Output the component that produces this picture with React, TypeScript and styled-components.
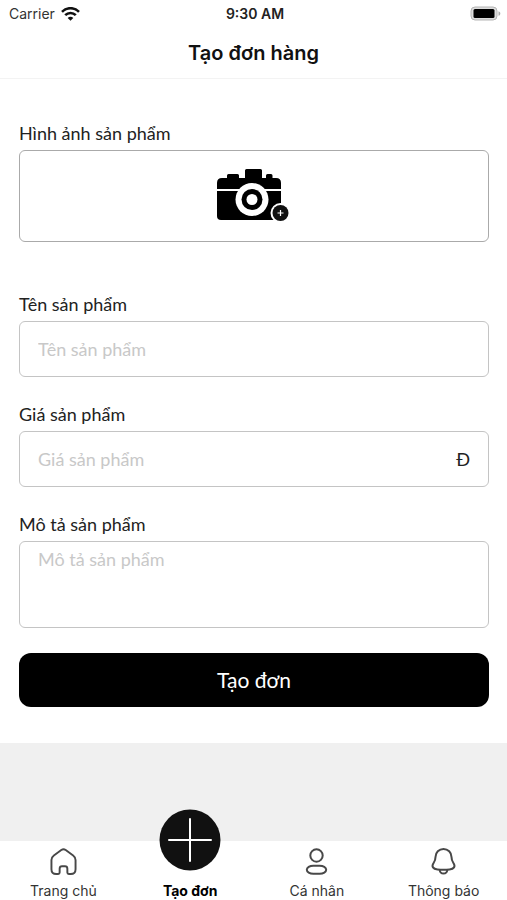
import React from "react";
import styled, { createGlobalStyle, css } from "styled-components";

const GlobalStyle = createGlobalStyle`
  *, *::before, *::after { box-sizing: border-box; }
  body { margin: 0; background: #f0f0f0; }
  button, input, textarea { font: inherit; }
`;

const systemFont = css`font-family: Inter, "Liberation Sans", sans-serif;`;
const formFont = css`font-family: Lato, "Noto Sans", sans-serif;`;

const Screen = styled.div`
  ${systemFont}
  display: flex;
  flex-direction: column;
  min-height: 100vh;
  color: #111;
`;

const StatusBar = styled.div`
  display: grid;
  grid-template-columns: 1fr auto 1fr;
  align-items: center;
  height: 27px;
  padding: 0 6px 0 9px;
  background: #fff;
  font-size: 14px;
  line-height: 20px;
`;

const Carrier = styled.span`
  display: flex;
  align-items: center;
  gap: 6px;
  color: #333;
`;

const Clock = styled.span`
  font-weight: 600;
  color: #222;
`;

const Battery = styled.svg`
  justify-self: end;
`;

const Header = styled.header`
  display: flex;
  align-items: center;
  justify-content: center;
  height: 52px;
  background: #fff;
  border-bottom: 1px solid #f3f3f3;
`;

const Title = styled.h1`
  margin: 0;
  font-size: 20px;
  line-height: 24px;
  font-weight: 600;
`;

const Form = styled.form`
  ${formFont}
  display: flex;
  flex-direction: column;
  gap: 25px;
  padding: 42px 18px 36px 19px;
  background: #fff;
  font-size: 18px;
  line-height: 24px;
`;

const Field = styled.div<{ $spaced?: boolean }>`
  display: flex;
  flex-direction: column;
  gap: 5px;
  margin-bottom: ${({ $spaced }) => ($spaced ? "25px" : "0")};
`;

const Label = styled.label`
  color: #222;
`;

const frame = css`
  border: 1px solid #c4c4c4;
  border-radius: 6px;
  background: #fff;
`;

const ImagePicker = styled.button`
  ${frame}
  display: flex;
  align-items: center;
  justify-content: center;
  height: 92px;
  padding: 0 2px 2px 0;
  border-color: #aaa;
  cursor: pointer;
`;

const InputFrame = styled.div`
  ${frame}
  display: flex;
  align-items: center;
  height: 56px;
  padding: 0 18px;
`;

const Input = styled.input`
  flex: 1;
  min-width: 0;
  padding: 0;
  border: 0;
  outline: 0;
  background: none;
  color: #222;
  &::placeholder { color: #c8c8c8; opacity: 1; }
`;

const Currency = styled.span`
  color: #222;
`;

const TextArea = styled.textarea`
  ${frame}
  display: block;
  height: 87px;
  padding: 5px 18px;
  outline: 0;
  resize: none;
  color: #222;
  &::placeholder { color: #c8c8c8; opacity: 1; }
`;

const Submit = styled.button`
  height: 54px;
  border: 0;
  border-radius: 12px;
  background: #000;
  color: #fff;
  font-size: 21px;
  cursor: pointer;
`;

const TabBar = styled.nav`
  display: grid;
  grid-template-columns: repeat(4, 1fr);
  height: 59px;
  margin-top: auto;
  background: #fff;
`;

const Tab = styled.a<{ $active?: boolean }>`
  display: flex;
  flex-direction: column;
  align-items: center;
  justify-content: flex-end;
  gap: ${({ $active }) => ($active ? "11px" : "7px")};
  height: 59px;
  color: ${({ $active }) => ($active ? "#000" : "#333")};
  font-size: 14px;
  line-height: 18px;
  font-weight: ${({ $active }) => ($active ? 700 : 400)};
  text-decoration: none;
  white-space: nowrap;
  svg { flex: none; }
`;

const TabIcon = styled.svg`
  fill: none;
  stroke: #484848;
  stroke-width: 2;
  stroke-linecap: round;
  stroke-linejoin: round;
`;

const WifiIcon = () => (
  <svg width="19" height="14" viewBox="0 0 19 14" fill="none" stroke="#111" strokeWidth="2.6" aria-hidden="true">
    <path d="M1 4.800C5.800 0 13.200 0 18 4.800" />
    <path d="M4.200 8.200c3-3 7.600-3 10.600 0" />
    <path d="M9.500 13.700 6.700 10.900c1.600-1.600 4-1.600 5.600 0Z" fill="#111" stroke="none" />
  </svg>
);

const BatteryIcon = () => (
  <Battery width="31" height="15" viewBox="0 0 31 15" role="img" aria-label="Battery full">
    <rect x="1" y="1" width="26" height="13" rx="4" fill="#ddd" stroke="#b5b5b5" />
    <rect x="3.500" y="3" width="21" height="9" rx="1.500" fill="#000" />
    <path d="M28.500 5.200c2.400.8 2.400 3.800 0 4.600Z" fill="#aaa" />
  </Battery>
);

const CameraIcon = () => (
  <svg width="74" height="54" viewBox="0 0 74 54" aria-hidden="true">
    <path
      d="M1 21v-6q0-5 5-5h5V7.500q0-1.500 1.500-1.500h9q1.500 0 1.500 1.500V10h6V2.500Q29 1 30.500 1h14Q46 1 46 2.500V10h4V7.500Q50 6 51.500 6H55q1.500 0 1.500 1.500V10H60q5 0 5 5v6Z"
      fill="#000"
    />
    <path d="M1 23h64v29H5q-4 0-4-4Z" fill="#000" />
    <circle cx="36" cy="31.500" r="16.500" fill="#fff" />
    <circle cx="36" cy="31.500" r="10.500" fill="#000" />
    <circle cx="36" cy="31.500" r="5.500" fill="#fff" />
    <circle cx="64.500" cy="45" r="10" fill="#fff" />
    <circle cx="64.500" cy="45" r="8" fill="#111" />
    <path d="M61.500 45h6M64.500 42v6" stroke="#fff" strokeWidth="1.200" />
  </svg>
);

const HomeIcon = () => (
  <TabIcon width="27" height="27" viewBox="0 0 28 28" aria-hidden="true">
    <path d="M1.500 12.500Q1.500 9.500 4 7.700L11.700 2.100Q14 .6 16.300 2.100L24 7.700Q26.500 9.500 26.500 12.500V22Q26.500 27 21.500 27H19.500Q18 27 18 25.500V21.500Q18 19 15.500 19H12.500Q10 19 10 21.500V25.500Q10 27 8.500 27H6.500Q1.500 27 1.500 22Z" />
  </TabIcon>
);

const AddIcon = () => (
  <svg width="62" height="62" viewBox="0 0 62 62" aria-hidden="true">
    <circle cx="31" cy="31" r="30.500" fill="#111" />
    <path d="M31 10v42M10 31h42" stroke="#fff" strokeWidth="2" strokeLinecap="round" />
  </svg>
);

const PersonIcon = () => (
  <TabIcon width="27" height="27" viewBox="0 0 27 27" aria-hidden="true">
    <circle cx="13.500" cy="7.500" r="6.200" />
    <rect x="3.800" y="17.700" width="19.400" height="8" rx="6.500" ry="4" />
  </TabIcon>
);

const BellIcon = () => (
  <TabIcon width="27" height="27" viewBox="0 0 27 27" aria-hidden="true">
    <path d="M13.500 1C9 1 5.500 4.500 5.500 9 5.500 12 5 13 3.600 15 1.200 18.500 3 21 7.500 21.400Q13.500 22 19.500 21.400C24 21 25.800 18.500 23.400 15 22 13 21.500 12 21.500 9 21.500 4.500 18 1 13.500 1Z" />
    <path d="M9.700 22C10.200 26.800 16.800 26.800 17.300 22" />
  </TabIcon>
);

const tabs = [
  { label: "Trang chủ", Icon: HomeIcon },
  { label: "Tạo đơn", Icon: AddIcon, active: true },
  { label: "Cá nhân", Icon: PersonIcon },
  { label: "Thông báo", Icon: BellIcon },
];

export default function App() {
  return (
    <Screen>
      <GlobalStyle />
      <StatusBar>
        <Carrier>Carrier <WifiIcon /></Carrier>
        <Clock>9:30 AM</Clock>
        <BatteryIcon />
      </StatusBar>
      <Header>
        <Title>Tạo đơn hàng</Title>
      </Header>
      <Form onSubmit={(e) => e.preventDefault()}>
        <Field $spaced>
          <Label htmlFor="image">Hình ảnh sản phẩm</Label>
          <ImagePicker id="image" type="button">
            <CameraIcon />
          </ImagePicker>
        </Field>
        <Field>
          <Label htmlFor="name">Tên sản phẩm</Label>
          <InputFrame>
            <Input id="name" placeholder="Tên sản phẩm" />
          </InputFrame>
        </Field>
        <Field>
          <Label htmlFor="price">Giá sản phẩm</Label>
          <InputFrame>
            <Input id="price" inputMode="numeric" placeholder="Giá sản phẩm" />
            <Currency>Đ</Currency>
          </InputFrame>
        </Field>
        <Field>
          <Label htmlFor="description">Mô tả sản phẩm</Label>
          <TextArea id="description" placeholder="Mô tả sản phẩm" />
        </Field>
        <Submit type="submit">Tạo đơn</Submit>
      </Form>
      <TabBar>
        {tabs.map(({ label, Icon, active }) => (
          <Tab key={label} href="#" $active={active} aria-current={active ? "page" : undefined}>
            <Icon />
            {label}
          </Tab>
        ))}
      </TabBar>
    </Screen>
  );
}
